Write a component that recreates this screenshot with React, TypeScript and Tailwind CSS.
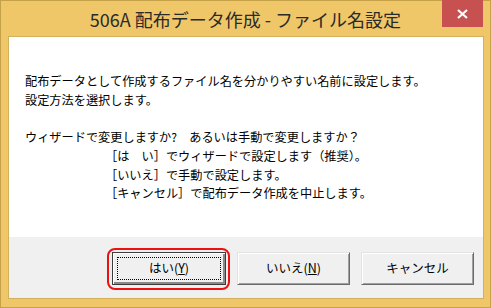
import type { ReactNode } from "react";

const jp = "font-['Meiryo_UI','Noto_Sans_CJK_JP',sans-serif]";

function WinButton({
  children,
  isDefault = false,
}: {
  children: ReactNode;
  isDefault?: boolean;
}) {
  return (
    <div className="relative">
      {isDefault && (
        <span className="pointer-events-none absolute -left-[5px] -top-[4px] -right-[4px] -bottom-[5px] rounded-[8px] border-2 border-[#ee1010]" />
      )}
      <button
        className={
          isDefault
            ? "relative flex h-[33px] w-[114px] items-center justify-center border border-[#3c3c3c] bg-[#f0f0f0] text-[12.5px] text-black shadow-[inset_1px_1px_#fff,inset_-2px_-2px_#8a8a8a]"
            : "relative flex h-[33px] w-[113px] items-center justify-center border border-t-[#e3e3e3] border-l-[#e3e3e3] border-r-[#6b6b6b] border-b-[#6b6b6b] bg-[#f0f0f0] text-[12.5px] text-black shadow-[inset_1px_1px_#fff,inset_-1px_-1px_#a0a0a0]"
        }
      >
        {isDefault && (
          <span className="pointer-events-none absolute inset-[4px] border border-dotted border-black" />
        )}
        <span className="relative">{children}</span>
      </button>
    </div>
  );
}

export default function App() {
  return (
    <div
      className={`${jp} flex h-[308px] w-[491px] flex-col border border-[#c5a24a] bg-[#efc769]`}
    >
      <div className="relative flex h-[35px] shrink-0 items-center justify-center">
        <div className="pt-[2px] text-[18px] text-[#2a2a2a]">
          506A 配布データ作成 - ファイル名設定
        </div>
        <div className="absolute -top-[1px] right-[7px] flex h-[27px] w-[41px] items-center justify-center bg-[#c75050]">
          <svg width="11" height="10" viewBox="0 0 11 10">
            <path
              d="M1 1 L10 9 M10 1 L1 9"
              stroke="#fff"
              strokeWidth="2.2"
              fill="none"
            />
          </svg>
        </div>
      </div>

      <div className="ml-[7px] mr-[6px] flex h-[263px] flex-col border border-[#d3b05c]">
        <div className="h-[200px] bg-white pl-[16px] pt-[35px] text-[12.2px] leading-[18.7px] text-black">
          <div>配布データとして作成するファイル名を分かりやすい名前に設定します。</div>
          <div>設定方法を選択します。</div>
          <div>&nbsp;</div>
          <div>ウィザードで変更しますか?　あるいは手動で変更しますか？</div>
          <div className="pl-[80px]">
            <div>［は　い］でウィザードで設定します（推奨）。</div>
            <div>［いいえ］で手動で設定します。</div>
            <div>［キャンセル］で配布データ作成を中止します。</div>
          </div>
        </div>
        <div className="flex flex-1 items-start justify-end gap-[11px] bg-[#f0f0f0] pr-[9px] pt-[15px]">
          <WinButton isDefault>
            はい(<span className="underline">Y</span>)
          </WinButton>
          <WinButton>
            いいえ(<span className="underline">N</span>)
          </WinButton>
          <WinButton>キャンセル</WinButton>
        </div>
      </div>
    </div>
  );
}
